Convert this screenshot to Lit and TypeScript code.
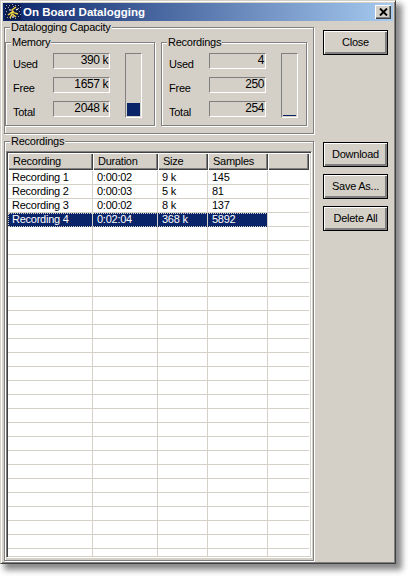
import { LitElement, html, css, svg } from "lit";
import { customElement } from "lit/decorators.js";

const rows = [
  ["Recording 1", "0:00:02", "9 k", "145"],
  ["Recording 2", "0:00:03", "5 k", "81"],
  ["Recording 3", "0:00:02", "8 k", "137"],
  ["Recording 4", "0:02:04", "368 k", "5892"],
];
const heads = ["Recording", "Duration", "Size", "Samples"];
const speckle: [number, number][] = [[1,1],[4,1],[7,0],[10,1],[13,1],[0,4],[3,3],[13,4],[15,3],[1,7],[14,7],[0,10],[2,13],[5,14],[10,14],[13,12],[15,10],[8,2],[12,9]];

@customElement("app-root")
export class AppRoot extends LitElement {
  static styles = css`
    :host { display: block; width: 408px; height: 576px; background: #fff; overflow: hidden;
      font-family: "Liberation Sans", Arial, sans-serif; font-size: 11px; letter-spacing: -0.25px; color: #000; }
    * { box-sizing: border-box; }
    .window { width: 396px; height: 564px; background: #d4d0c8; padding: 2px;
      border: 1px solid #404040; border-top-color: #d4d0c8; border-left-color: #d4d0c8;
      box-shadow: inset 1px 1px 0 #fff, inset -1px -1px 0 #808080, 5px 5px 6px 1px #8a8a8a;
      display: flex; flex-direction: column; }
    .title { height: 18px; flex: none; display: flex; align-items: center; padding: 0 2px 0 2px;
      background: linear-gradient(90deg, #0a246a, #a6caf0); color: #fff; }
    .icon { flex: none; width: 16px; height: 16px; margin-right: 2px; }
    .title .t { flex: 1; font: bold 11.5px "Liberation Sans", sans-serif; letter-spacing: 0; white-space: nowrap; }
    .x { width: 16px; height: 14px; background: #d4d0c8; display: flex; align-items: center; justify-content: center;
      box-shadow: inset 1px 1px 0 #fff, inset -1px -1px 0 #404040, inset -2px -2px 0 #808080; }
    .x svg { width: 9px; height: 8px; }
    .body { flex: 1; display: flex; min-height: 0; }
    .left { width: 311px; flex: none; margin-left: 1px; display: flex; flex-direction: column; gap: 1px; }
    .right { flex: 1; display: flex; flex-direction: column; padding: 9px 0 0 8px; }
    fieldset { margin: 0; min-width: 0; padding: 0; border: 1px solid #808080;
      box-shadow: 1px 1px 0 #fff, inset 1px 1px 0 #fff; }
    legend { padding: 0 1px; margin-left: 5px; height: 13px; line-height: 13px; background: #d4d0c8; white-space: nowrap; }
    .cap { height: 113px; display: flex; width: 310px; }
    .cap-in { display: flex; gap: 6px; padding: 2px 0 0 0; }
    .sub { height: 90px; }
    .mem { width: 150px; }
    .rec { width: 146px; }
    .sub-in { display: flex; padding: 4px 0 0 7px; }
    .fields { display: grid; grid-template-columns: 40px 57px; row-gap: 8px; align-content: start; }
    .lbl { height: 16px; line-height: 22px; }
    .val { height: 16px; line-height: 13px; text-align: right; padding-right: 1px;
      border: 1px solid #808080; border-right-color: #fff; border-bottom-color: #fff; font-size: 12px; letter-spacing: -0.4px; }
    .bar { width: 17px; height: 65px; margin-left: 15px; border: 1px solid #808080; border-right-color: #fff; border-bottom-color: #fff;
      padding: 1px; display: flex; align-items: flex-end; }
    .fill { width: 100%; background: #0a246a; }
    .recs { flex: 1; min-height: 0; width: 310px; }
    .list { width: 306px; height: 407px; margin: 3px 0 0 1px; background: #fff; overflow: hidden;
      border: 1px solid #808080; border-right-color: #fff; border-bottom-color: #fff;
      box-shadow: inset 1px 1px 0 #404040, inset -1px -1px 0 #d4d0c8; padding: 1px 2px 0 1px; }
    .hd { display: flex; height: 17px; background: #d4d0c8; }
    .hd div { height: 17px; line-height: 16px; padding-left: 5px; flex: none;
      box-shadow: inset 1px 1px 0 #fff, inset -1px -1px 0 #404040, inset -2px -2px 0 #808080; }
    .c1 { width: 85px; } .c2 { width: 65px; } .c3 { width: 50px; } .c4 { width: 60px; }
    .hd .c5 { flex: 1; }
    .rows { margin-top: 1px; }
    .row { display: flex; height: 14px; }
    .cells { display: flex; flex: none; height: 14px; }
    .row .cell { height: 14px; line-height: 13px; padding-left: 4px; flex: none;
      border-right: 1px solid #d4d0c8; border-bottom: 1px solid #d4d0c8; }
    .row .c5 { flex: 1; border-right: 0; }
    .row.sel .cells { background: #0a246a; color: #fff; outline: 1px dotted #d4d0c8; outline-offset: -1px; }
    .row.sel .cells .cell { border-bottom-color: #0a246a; }
    button { width: 65px; height: 25px; padding: 0 0 2px 0; margin: 0; font: inherit; letter-spacing: inherit; color: #000; background: #d4d0c8; border: 1px solid #000;
      box-shadow: inset 1px 1px 0 #fff, inset -1px -1px 0 #808080, inset -2px -2px 0 #808080; }
    .close { margin-bottom: 87px; }
    .gap { margin-bottom: 7px; }
  `;

  private field(label: string, value: string) {
    return html`<div class="lbl">${label}</div><div class="val">${value}</div>`;
  }

  render() {
    return html`<div class="window">
      <div class="title">
        <svg class="icon" viewBox="0 0 16 16">
          <rect width="16" height="16" fill="#0c1a48"/>
          ${speckle.map(([x, y]) => svg`<rect x=${x} y=${y} width="1" height="1" fill="#9aa4b8"/>`)}
          <path d="M11 3 L7 6 L9 9 M3 11 L7 8 L13 10 M5 14 L7 10 L11 13" stroke="#f0d040" stroke-width="1.5" fill="none"/>
          <path d="M4 6 L6 6 M11 6 L13 5 M8 12 L8 14" stroke="#fff" stroke-width="1.2" fill="none"/>
        </svg>
        <div class="t">On Board Datalogging</div>
        <div class="x"><svg viewBox="0 0 9 8"><path d="M1 0.5 L8 7.5 M8 0.5 L1 7.5" stroke="#000" stroke-width="1.9" fill="none"/></svg></div>
      </div>
      <div class="body">
        <div class="left">
          <fieldset class="cap">
            <legend>Datalogging Capacity</legend>
            <div class="cap-in">
              <fieldset class="sub mem">
                <legend>Memory</legend>
                <div class="sub-in">
                  <div class="fields">
                    ${this.field("Used", "390 k")}${this.field("Free", "1657 k")}${this.field("Total", "2048 k")}
                  </div>
                  <div class="bar"><div class="fill" style="height:13px"></div></div>
                </div>
              </fieldset>
              <fieldset class="sub rec">
                <legend>Recordings</legend>
                <div class="sub-in">
                  <div class="fields">
                    ${this.field("Used", "4")}${this.field("Free", "250")}${this.field("Total", "254")}
                  </div>
                  <div class="bar"><div class="fill" style="height:1px"></div></div>
                </div>
              </fieldset>
            </div>
          </fieldset>
          <fieldset class="recs">
            <legend>Recordings</legend>
            <div class="list">
              <div class="hd">
                ${heads.map((h, i) => html`<div class="c${i + 1}">${h}</div>`)}
                <div class="c5"></div>
              </div>
              <div class="rows">
                ${Array.from({ length: 28 }, (_, i) => {
                  const r = rows[i];
                  return html`<div class="row ${i === 3 ? "sel" : ""}">
                    <div class="cells">
                      ${[0, 1, 2, 3].map((k) => html`<div class="cell c${k + 1}">${r ? r[k] : ""}</div>`)}
                    </div>
                    <div class="cell c5"></div>
                  </div>`;
                })}
              </div>
            </div>
          </fieldset>
        </div>
        <div class="right">
          <button class="close">Close</button>
          <button class="gap">Download</button>
          <button class="gap">Save As...</button>
          <button>Delete All</button>
        </div>
      </div>
    </div>`;
  }
}
